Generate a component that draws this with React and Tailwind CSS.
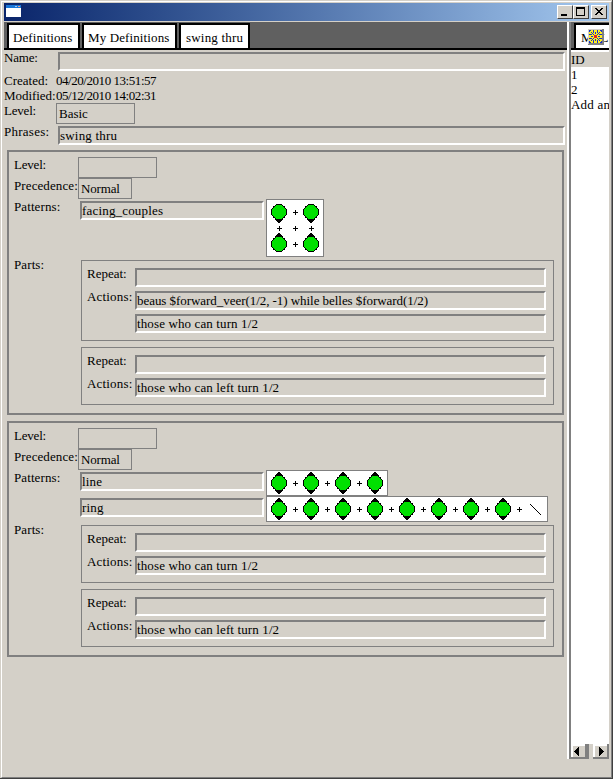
import React from "react";

const DEFINITIONS = [
  {
    patterns: [{ name: "facing_couples", cells: ["d+d", "+++", "u+u"] }],
    parts: [
      [
        "beaus $forward_veer(1/2, -1) while belles $forward(1/2)",
        "those who can turn 1/2",
      ],
      ["those who can left turn 1/2"],
    ],
  },
  {
    patterns: [
      { name: "line", cells: ["b+b+b+b"] },
      { name: "ring", cells: ["b+b+b+b+b+b+b+b+/"] },
    ],
    parts: [["those who can turn 1/2"], ["those who can left turn 1/2"]],
  },
];

function Dancer({ x, y, facing }) {
  return (
    <g transform={`translate(${x} ${y})`}>
      {facing !== "d" && <path d="M-4-7V-8H-3V-9H-2V-10H-1V-11H1V-10H2V-9H3V-8H4V-7Z" fill="#000" />}
      {facing !== "u" && <path d="M-4 7V8H-3V9H-2V10H-1V11H1V10H2V9H3V8H4V7Z" fill="#000" />}
      <circle r="7.5" fill="#00e000" stroke="#000" strokeWidth="1" />
    </g>
  );
}

function Formation({ cells }) {
  const w = (cells[0].length - 1) * 16 + 24;
  const h = (cells.length - 1) * 16 + 24;
  return (
    <div className="shrink-0 border border-[#808080] bg-white">
      <svg
        className="block"
        width={w}
        height={h}
        viewBox={`1 1 ${w} ${h}`}
        shapeRendering="crispEdges"
      >
        {cells.map((row, r) =>
          [...row].map((c, i) => {
            const x = 13 + i * 16;
            const y = 13 + r * 16;
            const key = `${r}-${i}`;
            if (c === "+")
              return (
                <path
                  key={key}
                  d={`M${x - 2} ${y}h2v-2h1v2h2v1h-2v2h-1v-2h-2z`}
                  fill="#000"
                />
              );
            if (c === "/")
              return (
                <path
                  key={key}
                  d={`M${x - 5} ${y - 5}l11 11`}
                  stroke="#000"
                  strokeWidth="1"
                />
              );
            return <Dancer key={key} x={x} y={y} facing={c} />;
          })
        )}
      </svg>
    </div>
  );
}

function Field({ value, className = "" }) {
  return (
    <div
      className={`mt-[2px] h-[19px] shrink-0 whitespace-nowrap border-2 border-b-white border-l-[#808080] border-r-white border-t-[#808080] ${className}`}
    >
      {value}
    </div>
  );
}

function Choice({ value, className = "" }) {
  return (
    <div
      className={`h-[21px] shrink-0 border border-[#808080] pl-[2px] pt-[2px] ${className}`}
    >
      {value}
    </div>
  );
}

function Part({ actions }) {
  return (
    <div className="m-[3px] mr-0 w-[473px] border border-[#808080] p-[5px]">
      <div className="flex h-[23px]">
        <div className="w-[48px]">Repeat:</div>
        <Field className="w-[411px]" />
      </div>
      {actions.map((a, i) => (
        <div key={a} className="flex h-[23px]">
          <div className="w-[48px] shrink-0 tracking-[0.18px]">
            {i === 0 ? "Actions:" : ""}
          </div>
          <Field
            className={`w-[411px] ${a.length > 40 ? "tracking-[-0.05px]" : "tracking-[0.12px]"}`}
            value={a}
          />
        </div>
      ))}
    </div>
  );
}

function Definition({ patterns, parts }) {
  return (
    <div className="w-[557px] border-2 border-[#808080] p-[5px]">
      <div className="flex">
        <div className="w-[64px] tracking-[-0.2px]">Level:</div>
        <Choice className="w-[79px]" />
      </div>
      <div className="flex">
        <div className="w-[64px] tracking-[0.1px]">Precedence:</div>
        <Choice className="w-[54px] tracking-[-0.15px]" value="Normal" />
      </div>
      {patterns.map((p, i) => (
        <div key={p.name} className="flex">
          <div className="w-[66px] shrink-0 tracking-[0.1px]">
            {i === 0 ? "Patterns:" : ""}
          </div>
          <Field
            className="mr-[2px] w-[184px] tracking-[0.18px]"
            value={p.name}
          />
          <Formation cells={p.cells} />
        </div>
      ))}
      <div className="flex">
        <div className="w-[64px] shrink-0 tracking-[0.1px]">Parts:</div>
        <div className="flex flex-col">
          {parts.map((a, i) => (
            <Part key={i} actions={a} />
          ))}
        </div>
      </div>
    </div>
  );
}

function Tab({ label, className = "" }) {
  return (
    <div
      className={`h-[27px] shrink-0 whitespace-nowrap border-2 border-black bg-white pt-[5px] ${className}`}
    >
      {label}
    </div>
  );
}

function WindowButton({ className = "", children }) {
  return (
    <div
      className={`h-[14px] w-[16px] border border-b-[#404040] border-l-white border-r-[#404040] border-t-white bg-[#d4d0c8] ${className}`}
    >
      <svg
        className="block"
        width="14"
        height="12"
        shapeRendering="crispEdges"
        fill="none"
        stroke="#000"
      >
        {children}
      </svg>
    </div>
  );
}

function TitleBar() {
  return (
    <div className="flex h-[18px] items-start bg-linear-to-r from-[#0a246a] to-[#a6caf0] pl-[2px] pr-[2px] pt-[2px]">
      <svg width="15" height="12" className="block" shapeRendering="crispEdges">
        <rect width="15" height="12" fill="#fff" />
        <rect width="15" height="3" fill="#1c78d8" />
        <rect x="9" y="1" width="2" height="1" fill="#9cf" />
        <rect x="12" y="1" width="2" height="1" fill="#f0a080" />
      </svg>
      <div className="ml-auto flex">
        <WindowButton>
          <path d="M3 9h6" strokeWidth="2" />
        </WindowButton>
        <WindowButton>
          <path d="M2 2h9" strokeWidth="2" />
          <path d="M2.5 2v7.500h8V2" />
        </WindowButton>
        <WindowButton className="ml-[2px]">
          <path
            d="M3 2h2v1h1v1h2v-1h1v-1h2v1h-1v1h-1v1h-1v1h1v1h1v1h1v1h-2v-1h-1v-1h-2v1h-1v1h-2v-1h1v-1h1v-1h1v-1h-1v-1h-1v-1h-1z"
            fill="#000"
            stroke="none"
          />
        </WindowButton>
      </div>
    </div>
  );
}

function FlowerIcon() {
  return (
    <svg
      className="absolute left-[12px] top-[4px]"
      width="16"
      height="16"
      shapeRendering="crispEdges"
    >
      <rect width="16" height="16" fill="#808080" />
      <path d="M0 0h14v1h-13v14h-1z" fill="#d4d0c8" />
      <rect x="1" y="1" width="13" height="13" fill="#ffee20" />
      <g fill="#1830c8">
        <path d="M1 1h2v1h-1v1h-1zM14 1h-2v1h1v1h1zM1 14h2v-1h-1v-1h-1zM14 14h-2v-1h1v-1h1z" />
        <path d="M5 1h1v3h-1zM9 1h1v3h-1zM5 11h1v3h-1zM9 11h1v3h-1z" />
        <path d="M1 5h3v1h-3zM1 9h3v1h-3zM11 5h3v1h-3zM11 9h3v1h-3z" />
        <path d="M3 3h1v1h-1zM11 3h1v1h-1zM3 11h1v1h-1zM11 11h1v1h-1z" />
        <path d="M7 3h1v2h-1zM7 10h1v2h-1zM3 7h2v1h-2zM10 7h2v1h-2z" />
        <path d="M5 5h1v1h-1zM9 5h1v1h-1zM5 9h1v1h-1zM9 9h1v1h-1z" />
        <path d="M4 4h1v1h-1zM10 4h1v1h-1zM4 10h1v1h-1zM10 10h1v1h-1z" />
      </g>
      <rect x="6" y="6" width="3" height="3" fill="#e02020" />
    </svg>
  );
}

function ScrollButton({ d, className = "" }) {
  return (
    <div
      className={`h-[15px] border-b-2 border-[#808080] bg-white pl-[2px] pt-[2px] ${className}`}
    >
      <svg
        className="block bg-[#d4d0c8]"
        width="12"
        height="11"
        shapeRendering="crispEdges"
      >
        <path d={d} />
      </svg>
    </div>
  );
}

function SidePanel() {
  return (
    <div className="flex h-[737px] w-[42px] shrink-0 flex-col overflow-hidden border-l-2 border-l-white">
      <div className="flex min-h-0 flex-1 flex-col overflow-hidden border-l-2 border-l-[#808080] bg-white">
        <div className="flex h-[28px] shrink-0 items-end overflow-hidden border-b-2 border-black bg-[#606060] pl-[3px]">
          <div className="relative h-[25px] w-[60px] shrink-0 whitespace-nowrap border-l-2 border-t-2 border-black bg-white pl-[5px] pt-[5px]">
            M<span className="ml-[8px]">L</span>
            <FlowerIcon />
          </div>
        </div>
        <div className="mt-[2px] h-[15px] shrink-0 bg-[#d4d0c8]">ID</div>
        <div>1</div>
        <div>2</div>
        <div className="whitespace-nowrap tracking-[0.2px]">Add an</div>
      </div>
      <div className="flex h-[15px] shrink-0 bg-[#d4d0c8]">
        <div className="w-[2px] bg-[#808080]" />
        <ScrollButton
          className="w-[18px] border-r-4"
          d="M6 1v9h-1v-1h-1v-1h-1v-1h-1v-1h-1v-1h1v-1h1v-1h1v-1h1v-1z"
        />
        <ScrollButton
          className="ml-[4px] w-[16px] border-r-2"
          d="M4 1v9h1v-1h1v-1h1v-1h1v-1h1v-1h-1v-1h-1v-1h-1v-1h-1v-1z"
        />
      </div>
    </div>
  );
}

export default function App() {
  return (
    <div className="h-[779px] w-[613px] overflow-hidden border-b border-r border-[#404040] bg-[#d4d0c8] pl-px pt-px font-['Liberation_Serif','Times_New_Roman',serif] text-[13px] leading-[15px] text-black">
      <div className="h-[777px] border border-b-[#808080] border-l-white border-r-[#808080] border-t-white pl-[2px] pr-[2px] pt-px">
        <TitleBar />
        <div className="mt-px flex items-start">
          <div className="w-[563px] shrink-0">
            <div className="flex h-[28px] items-end border-b-2 border-black bg-[#606060] pl-[3px]">
              <Tab
                className="-mb-[2px] mr-[2px] w-[73px] pl-[4px] tracking-[0.07px]"
                label="Definitions"
              />
              <Tab
                className="-mb-[2px] mr-[2px] w-[95px] pl-[4px] tracking-[0.12px]"
                label="My Definitions"
              />
              <Tab
                className="-mb-[2px] w-[71px] pl-[5px] tracking-[0.2px]"
                label="swing thru"
              />
            </div>
            <div className="flex h-[23px]">
              <div className="w-[54px] tracking-[-0.2px]">Name:</div>
              <Field className="w-[507px]" />
            </div>
            <div className="flex">
              <div className="w-[52px]">Created:</div>
              <div className="tracking-[-0.45px]">04/20/2010 13:51:57</div>
            </div>
            <div className="flex">
              <div className="w-[52px] tracking-[-0.05px]">Modified:</div>
              <div className="tracking-[-0.45px]">05/12/2010 14:02:31</div>
            </div>
            <div className="flex">
              <div className="w-[52px] tracking-[-0.2px]">Level:</div>
              <Choice className="w-[79px]" value="Basic" />
            </div>
            <div className="flex h-[23px]">
              <div className="w-[54px] tracking-[0.25px]">Phrases:</div>
              <Field className="w-[507px] tracking-[0.2px]" value="swing thru" />
            </div>
            <div className="flex flex-col gap-[6px] p-[3px]">
              {DEFINITIONS.map((d, i) => (
                <Definition key={i} {...d} />
              ))}
            </div>
          </div>
          <SidePanel />
        </div>
      </div>
    </div>
  );
}
